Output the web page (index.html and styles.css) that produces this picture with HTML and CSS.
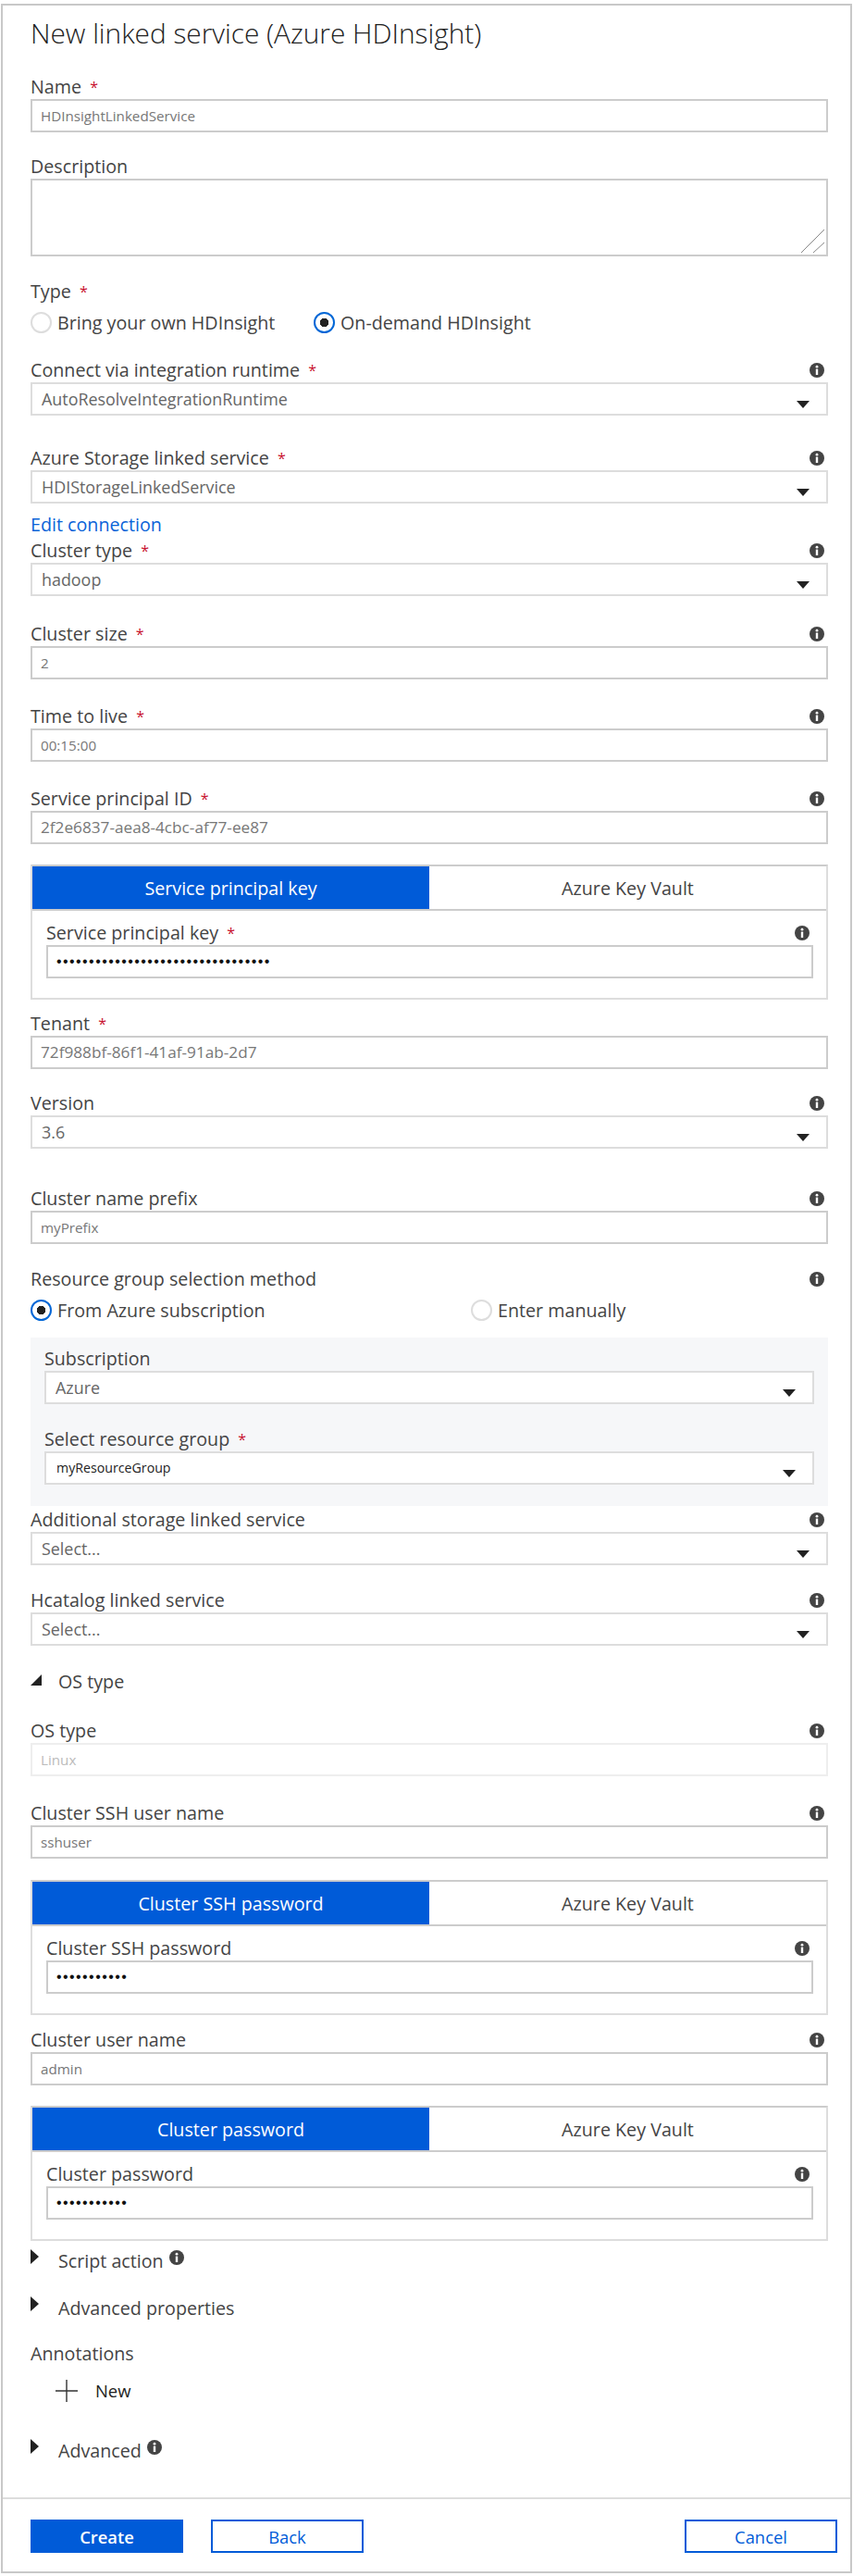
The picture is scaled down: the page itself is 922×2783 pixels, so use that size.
FILE: index.html
```html
<!DOCTYPE html>
<html lang="en">
<head>
    <meta charset="UTF-8">
    <title>New linked service (Azure HDInsight)</title>
    <link rel="stylesheet" href="styles.css">
</head>
<body>
    <svg class="sprite" width="0" height="0">
        <symbol id="info" viewBox="0 0 16 16">
            <circle cx="8" cy="8" r="8" fill="#444"/>
            <circle cx="8" cy="4.2" r="1.4" fill="#fff"/>
            <rect x="6.8" y="6.6" width="2.4" height="6.4" fill="#fff"/>
        </symbol>
    </svg>

    <div class="panel">
        <h1>New linked service (Azure HDInsight)</h1>

        <div class="form">
            <div class="field">
                <div class="label">Name <span class="req">*</span></div>
                <div class="input">HDInsightLinkedService</div>
            </div>

            <div class="field mt-24">
                <div class="label">Description</div>
                <div class="input area">
                    <svg class="grip" width="28" height="28" viewBox="0 0 28 28"><path d="M26 1 L1 26 M26 15 L14 26" stroke="#888" fill="none"/></svg>
                </div>
            </div>

            <div class="field mt-25">
                <div class="label">Type <span class="req">*</span></div>
                <div class="radios">
                    <div class="radio w-306"><span class="dot"></span>Bring your own HDInsight</div>
                    <div class="radio"><span class="dot on"></span>On-demand HDInsight</div>
                </div>
            </div>

            <div class="field mt-27">
                <div class="label">Connect via integration runtime <span class="req">*</span><svg class="info push"><use href="#info"/></svg></div>
                <div class="input select">AutoResolveIntegrationRuntime<span class="caret"></span></div>
            </div>

            <div class="field mt-33">
                <div class="label">Azure Storage linked service <span class="req">*</span><svg class="info push"><use href="#info"/></svg></div>
                <div class="input select">HDIStorageLinkedService<span class="caret"></span></div>
            </div>

            <a class="link mt-10">Edit connection</a>

            <div class="field mt-2">
                <div class="label">Cluster type <span class="req">*</span><svg class="info push"><use href="#info"/></svg></div>
                <div class="input select">hadoop<span class="caret"></span></div>
            </div>

            <div class="field mt-28">
                <div class="label">Cluster size <span class="req">*</span><svg class="info push"><use href="#info"/></svg></div>
                <div class="input">2</div>
            </div>

            <div class="field mt-27">
                <div class="label">Time to live <span class="req">*</span><svg class="info push"><use href="#info"/></svg></div>
                <div class="input">00:15:00</div>
            </div>

            <div class="field mt-27">
                <div class="label">Service principal ID <span class="req">*</span><svg class="info push"><use href="#info"/></svg></div>
                <div class="input guid">2f2e6837-aea8-4cbc-af77-ee87</div>
            </div>

            <div class="tabbox mt-22">
                <div class="tabs">
                    <div class="tab active">Service principal key</div>
                    <div class="tab">Azure Key Vault</div>
                </div>
                <div class="tabbody">
                    <div class="label">Service principal key <span class="req">*</span><svg class="info push"><use href="#info"/></svg></div>
                    <div class="input secret">•••••••••••••••••••••••••••••••••</div>
                </div>
            </div>

            <div class="field mt-13">
                <div class="label">Tenant <span class="req">*</span></div>
                <div class="input guid">72f988bf-86f1-41af-91ab-2d7</div>
            </div>

            <div class="field mt-24">
                <div class="label">Version<svg class="info push"><use href="#info"/></svg></div>
                <div class="input select">3.6<span class="caret"></span></div>
            </div>

            <div class="field mt-41">
                <div class="label">Cluster name prefix<svg class="info push"><use href="#info"/></svg></div>
                <div class="input">myPrefix</div>
            </div>

            <div class="field mt-25">
                <div class="label">Resource group selection method<svg class="info push"><use href="#info"/></svg></div>
                <div class="radios">
                    <div class="radio w-476"><span class="dot on"></span>From Azure subscription</div>
                    <div class="radio"><span class="dot"></span>Enter manually</div>
                </div>
            </div>

            <div class="greybox mt-18">
                <div class="label">Subscription</div>
                <div class="input select">Azure<span class="caret"></span></div>
                <div class="label mt-25">Select resource group <span class="req">*</span></div>
                <div class="input select dark">myResourceGroup<span class="caret"></span></div>
            </div>

            <div class="field mt-2">
                <div class="label">Additional storage linked service<svg class="info push"><use href="#info"/></svg></div>
                <div class="input select">Select...<span class="caret"></span></div>
            </div>

            <div class="field mt-25">
                <div class="label">Hcatalog linked service<svg class="info push"><use href="#info"/></svg></div>
                <div class="input select">Select...<span class="caret"></span></div>
            </div>

            <div class="toggle mt-26"><span class="tri open"></span>OS type</div>

            <div class="field mt-27">
                <div class="label">OS type<svg class="info push"><use href="#info"/></svg></div>
                <div class="input disabled">Linux</div>
            </div>

            <div class="field mt-27">
                <div class="label">Cluster SSH user name<svg class="info push"><use href="#info"/></svg></div>
                <div class="input">sshuser</div>
            </div>

            <div class="tabbox mt-23">
                <div class="tabs">
                    <div class="tab active">Cluster SSH password</div>
                    <div class="tab">Azure Key Vault</div>
                </div>
                <div class="tabbody">
                    <div class="label">Cluster SSH password<svg class="info push"><use href="#info"/></svg></div>
                    <div class="input secret">•••••••••••</div>
                </div>
            </div>

            <div class="field mt-14">
                <div class="label">Cluster user name<svg class="info push"><use href="#info"/></svg></div>
                <div class="input">admin</div>
            </div>

            <div class="tabbox mt-22">
                <div class="tabs">
                    <div class="tab active">Cluster password</div>
                    <div class="tab">Azure Key Vault</div>
                </div>
                <div class="tabbody">
                    <div class="label">Cluster password<svg class="info push"><use href="#info"/></svg></div>
                    <div class="input secret">•••••••••••</div>
                </div>
            </div>

            <div class="toggle mt-9"><span class="tri"></span>Script action<svg class="info side"><use href="#info"/></svg></div>
            <div class="toggle mt-25"><span class="tri"></span>Advanced properties</div>
            <div class="label mt-23">Annotations</div>
            <div class="add mt-14">
                <svg class="plus" width="24" height="24" viewBox="0 0 24 24"><path d="M12 0 V24 M0 12 H24" stroke="#333" stroke-width="1.4" fill="none"/></svg>
                New
            </div>
            <div class="toggle mt-39"><span class="tri"></span>Advanced<svg class="info side"><use href="#info"/></svg></div>
        </div>

        <div class="footer">
            <button class="btn primary">Create</button>
            <button class="btn">Back</button>
            <button class="btn right">Cancel</button>
        </div>
    </div>
</body>
</html>
```

FILE: styles.css
```css
/* Page and outer panel */
body {
    margin: 0;
    background-color: #fff;
    font-family: "Open Sans", "Noto Sans", sans-serif;
    font-size: 19.7px;
    color: #444;
}

.sprite {
    display: block;
    height: 0;
}

.panel {
    margin: 4px 1px 3px 1px;
    height: 2776px;
    box-sizing: border-box;
    border: 2px solid #c8c8c8;
    display: flex;
    flex-direction: column;
}

h1 {
    margin: 0;
    padding: 9px 0 0 30px;
    height: 75px;
    box-sizing: border-box;
    font-size: 29.8px;
    line-height: 42px;
    font-weight: 300;
    color: #222;
}

/* Form column */
.form {
    padding: 0 24px 0 30px;
    display: flex;
    flex-direction: column;
    flex: 1;
}

.label {
    height: 26px;
    line-height: 26px;
    display: flex;
    align-items: center;
    white-space: pre;
}

.req {
    color: #c8102e;
    font-size: 16px;
    margin-left: 4px;
}

.info {
    width: 16px;
    height: 16px;
}

.push {
    margin-left: auto;
    margin-right: 4px;
}

.side {
    margin-left: 6px;
    position: relative;
    top: -4px;
}

.input {
    height: 36px;
    box-sizing: border-box;
    border: 2px solid #ccc;
    background-color: #fff;
    padding-left: 9px;
    line-height: 32px;
    font-size: 15.2px;
    color: #777;
    position: relative;
}

.guid {
    font-size: 17.2px;
}

.area {
    height: 84px;
}

.grip {
    position: absolute;
    right: 0;
    bottom: 0;
}

.select {
    display: flex;
    justify-content: space-between;
    border-color: #ddd;
    padding: 0 18px 0 10px;
    font-size: 17.9px;
    color: #666;
}

.select.dark {
    font-size: 14.2px;
    color: #222;
    padding-left: 11px;
}

.caret {
    width: 0;
    height: 0;
    margin-top: 18px;
    border-left: 7px solid transparent;
    border-right: 7px solid transparent;
    border-top: 8px solid #222;
}

.disabled {
    border-color: #eee;
    color: #bbb;
}

.secret {
    font-family: "Liberation Sans", sans-serif;
    font-size: 16px;
    letter-spacing: 1.42px;
    color: #111;
}

/* Radios */
.radios {
    display: flex;
    margin-top: 8px;
}

.radio {
    display: flex;
    align-items: center;
    height: 24px;
}

.w-306 {
    width: 306px;
}

.w-476 {
    width: 476px;
}

.dot {
    width: 23px;
    height: 23px;
    box-sizing: border-box;
    border: 2px solid #ddd;
    border-radius: 50%;
    margin-right: 6px;
    flex: none;
}

.dot.on {
    border: 2.5px solid #0066d6;
    background: radial-gradient(circle, #222 0, #222 4.5px, #fff 5px);
}

.link {
    height: 26px;
    line-height: 26px;
    color: #0a63d8;
}

/* Tabbed boxes */
.tabbox {
    border: 2px solid #ddd;
    border-top-color: #ccc;
}

.tabs {
    display: flex;
    height: 48px;
    box-sizing: border-box;
    border-bottom: 2px solid #ccc;
}

.tab {
    flex: 1;
    text-align: center;
    line-height: 48px;
}

.tab.active {
    background-color: #005bd8;
    color: #fff;
    flex: none;
    width: 429px;
}

.tabbody {
    padding: 11px 14px 21px 15px;
}

.greybox {
    background-color: #f6f7f9;
    padding: 10px 15px 23px 15px;
}

/* Collapsed sections */
.toggle {
    height: 26px;
    line-height: 26px;
    display: flex;
    align-items: center;
}

.tri {
    width: 0;
    height: 0;
    margin-right: 21px;
    margin-top: -10px;
    border-top: 8px solid transparent;
    border-bottom: 8px solid transparent;
    border-left: 9px solid #222;
}

.tri.open {
    margin-right: 18px;
    margin-top: -4px;
    border-top: 0;
    border-left: 12px solid transparent;
    border-bottom: 12px solid #222;
}

.add {
    height: 26px;
    line-height: 26px;
    display: flex;
    align-items: center;
    font-size: 18.4px;
    color: #222;
    padding-left: 27px;
}

.plus {
    margin-right: 19px;
}

/* Footer */
.footer {
    height: 80px;
    box-sizing: border-box;
    border-top: 2px solid #ddd;
    padding: 22px 14px 0 30px;
    display: flex;
    gap: 30px;
}

.btn {
    width: 165px;
    height: 36px;
    box-sizing: border-box;
    border: 2px solid #005bd8;
    background-color: #fff;
    color: #005bd8;
    font-family: inherit;
    font-size: 18.4px;
    padding: 0;
}

.btn.primary {
    background-color: #005bd8;
    color: #fff;
    font-weight: 600;
}

.btn.right {
    margin-left: auto;
}

/* Vertical gaps, the form is not evenly spaced */
.mt-2 { margin-top: 2px; }
.mt-9 { margin-top: 9px; }
.mt-10 { margin-top: 10px; }
.mt-13 { margin-top: 13px; }
.mt-14 { margin-top: 14px; }
.mt-18 { margin-top: 18px; }
.mt-22 { margin-top: 22px; }
.mt-23 { margin-top: 23px; }
.mt-24 { margin-top: 24px; }
.mt-25 { margin-top: 25px; }
.mt-26 { margin-top: 26px; }
.mt-27 { margin-top: 27px; }
.mt-28 { margin-top: 28px; }
.mt-33 { margin-top: 33px; }
.mt-39 { margin-top: 39px; }
.mt-41 { margin-top: 41px; }
```
